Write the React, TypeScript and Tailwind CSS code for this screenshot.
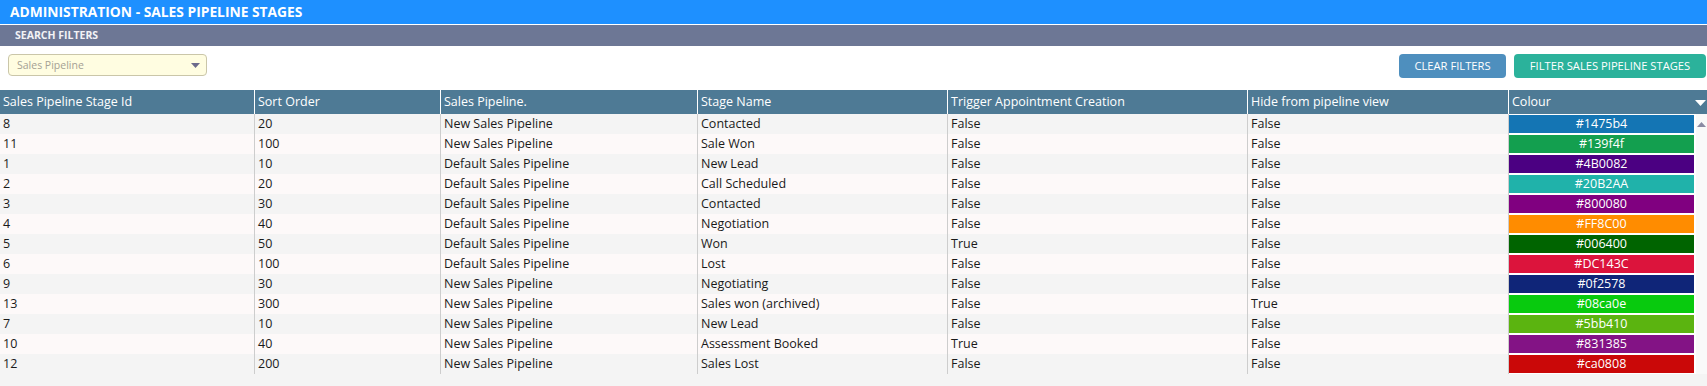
import React from 'react';

type Row = [string, string, string, string, string, string, string];

const rows: Row[] = [
  ['8', '20', 'New Sales Pipeline', 'Contacted', 'False', 'False', '#1475b4'],
  ['11', '100', 'New Sales Pipeline', 'Sale Won', 'False', 'False', '#139f4f'],
  ['1', '10', 'Default Sales Pipeline', 'New Lead', 'False', 'False', '#4B0082'],
  ['2', '20', 'Default Sales Pipeline', 'Call Scheduled', 'False', 'False', '#20B2AA'],
  ['3', '30', 'Default Sales Pipeline', 'Contacted', 'False', 'False', '#800080'],
  ['4', '40', 'Default Sales Pipeline', 'Negotiation', 'False', 'False', '#FF8C00'],
  ['5', '50', 'Default Sales Pipeline', 'Won', 'True', 'False', '#006400'],
  ['6', '100', 'Default Sales Pipeline', 'Lost', 'False', 'False', '#DC143C'],
  ['9', '30', 'New Sales Pipeline', 'Negotiating', 'False', 'False', '#0f2578'],
  ['13', '300', 'New Sales Pipeline', 'Sales won (archived)', 'False', 'True', '#08ca0e'],
  ['7', '10', 'New Sales Pipeline', 'New Lead', 'False', 'False', '#5bb410'],
  ['10', '40', 'New Sales Pipeline', 'Assessment Booked', 'True', 'False', '#831385'],
  ['12', '200', 'New Sales Pipeline', 'Sales Lost', 'False', 'False', '#ca0808'],
];

const headers = [
  'Sales Pipeline Stage Id',
  'Sort Order',
  'Sales Pipeline.',
  'Stage Name',
  'Trigger Appointment Creation',
  'Hide from pipeline view',
];

const widths = ['w-[254px]', 'w-[186px]', 'w-[257px]', 'w-[250px]', 'w-[300px]', 'w-[261px]'];

export default function App() {
  return (
    <div className="w-[1707px] min-h-[386px] bg-[#f4f4f4] font-['Open_Sans',sans-serif] text-[12.5px]">
      {/* Title */}
      <div className="h-[24px] bg-[#1e90ff] flex items-center pl-[10px] text-white font-bold text-[13.8px] leading-none">
        ADMINISTRATION - SALES PIPELINE STAGES
      </div>
      <div className="h-[22px] border-t border-white bg-[#6d7795] flex items-center pl-[15px] text-[#f2f2f6] font-bold text-[10.5px] leading-none">
        SEARCH FILTERS
      </div>

      {/* Filters */}
      <div className="h-[44px] bg-white flex items-start justify-between pt-[8px] pl-[8px] pr-[1px]">
        <div className="w-[199px] h-[22px] rounded-[4px] border border-[#cac6a9] bg-[#fffde1] flex items-center justify-between pl-[8px] pr-[6px]">
          <span className="text-[10.5px] text-[#a5a194] leading-none">Sales Pipeline</span>
          <svg width="9" height="5" viewBox="0 0 9 5">
            <path d="M0 0h9L4.5 5z" fill="#6c6a8c" />
          </svg>
        </div>
        <div className="flex gap-[8px]">
          <button className="w-[107px] h-[24px] rounded-[4px] bg-[#4e8fbe] text-white text-[11.2px] leading-none">
            CLEAR FILTERS
          </button>
          <button className="w-[192px] h-[24px] rounded-[4px] bg-[#2bb29b] text-white text-[11.2px] leading-none">
            FILTER SALES PIPELINE STAGES
          </button>
        </div>
      </div>

      {/* Grid header */}
      <div className="flex h-[24px] bg-[#4e7a95] text-white">
        {headers.map((h, i) => (
          <div
            key={h}
            className={`${widths[i]} flex items-center pl-[3px] pt-[1px] ${i > 0 ? 'border-l border-white' : ''}`}
          >
            {h}
          </div>
        ))}
        <div className="flex-1 flex items-center justify-between border-l border-white pl-[3px] pt-[1px] pr-[1px]">
          <span>Colour</span>
          <svg width="11" height="6" viewBox="0 0 11 6">
            <path d="M0 0h11L5.5 6z" fill="#ffffff" />
          </svg>
        </div>
      </div>

      {/* Grid body */}
      <div className="text-[#1a1a1a]">
        {rows.map((r, ri) => (
          <div key={r[0]} className={`flex h-[20px] ${ri % 2 === 0 ? 'bg-[#f4f4f4]' : 'bg-[#fdf9f9]'}`}>
            {r.slice(0, 6).map((c, i) => (
              <div
                key={i}
                className={`${widths[i]} flex items-center pl-[3px] pt-[1px] whitespace-nowrap ${i > 0 ? 'border-l border-[#cdcdcd]' : ''}`}
              >
                {c}
              </div>
            ))}
            <div className="w-[188px] h-[20px] bg-white border-l border-[#cdcdcd] pr-[2px] py-[1px]">
              <div
                className="h-[18px] flex items-center justify-center pt-[1px] text-white"
                style={{ backgroundColor: r[6] }}
              >
                {r[6]}
              </div>
            </div>
            <div className="flex-1 bg-[#f9f9f9] flex justify-center">
              {ri === 0 && (
                <svg className="mt-[8px]" width="9" height="5" viewBox="0 0 9 5">
                  <path d="M4.5 0L9 5H0z" fill="#8a8aa3" />
                </svg>
              )}
            </div>
          </div>
        ))}
      </div>
    </div>
  );
}
